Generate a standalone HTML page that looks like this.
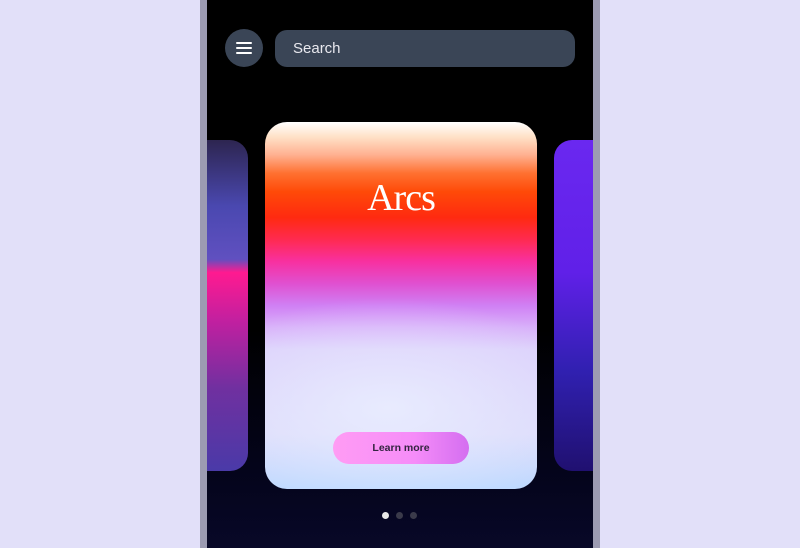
<!DOCTYPE html>
<html><head><style>
html,body{margin:0;padding:0}
body{width:800px;height:548px;background:#e2e0f9;position:relative;overflow:hidden;font-family:"Liberation Sans",sans-serif}
.phone{position:absolute;left:200px;top:0;width:400px;height:548px;background:#9c9bb2}
.scr{position:absolute;left:207px;top:0;width:386px;height:548px;background:linear-gradient(#000 0%,#000 60%,#04041a 85%,#080828 100%);overflow:hidden}
.menu{position:absolute;left:225px;top:29px;width:38px;height:38px;border-radius:50%;background:#3a4556}
.menu i{position:absolute;left:11px;width:16px;height:2px;background:#fff;border-radius:1px}
.search{position:absolute;left:275px;top:30px;width:300px;height:37px;border-radius:12px;background:#3a4556;color:#e8e8ee;font-size:15px;line-height:37px;text-indent:18px}
.card{position:absolute;left:265px;top:122px;width:272px;height:367px;border-radius:22px;overflow:hidden;
background:
radial-gradient(ellipse 80% 30% at 45% 78%, rgba(235,240,255,0.8) 0%, rgba(235,240,255,0) 100%),
linear-gradient(#ffffff 0%,#ffe2c8 4%,#ffb090 9%,#ff7030 14%,#ff4a08 19%,#ff2a10 26%,#ff2a50 32%,#f830a0 38%,#e050d0 44%,#d080f4 50%,#d8b0fa 56%,#dcd0fb 62%,#dcdafb 85%,#bcd8ff 100%)}
.title{position:absolute;left:0;right:0;top:54px;text-align:center;font-family:"Liberation Serif",serif;font-size:38px;color:#fff;letter-spacing:-1px}
.btn{position:absolute;left:68px;top:310px;width:136px;height:32px;border-radius:16px;background:linear-gradient(90deg,#ff9cf4,#f58cf8 60%,#d46ef0);font-size:10.5px;font-weight:bold;color:#332440;text-align:center;line-height:32px}
.lc{position:absolute;left:207px;top:140px;width:41px;height:331px;border-radius:0 18px 18px 0;background:linear-gradient(#2d2550 0%,#4a48b0 20%,#6050c0 36%,#ff1a90 40%,#c020a0 55%,#7030a0 75%,#4a3aa8 100%)}
.rc{position:absolute;left:554px;top:140px;width:39px;height:331px;border-radius:18px 0 0 18px;background:linear-gradient(#6a28f0 0%,#6020e8 40%,#3020b0 70%,#201070 100%)}
.dot{position:absolute;top:512px;width:7px;height:7px;border-radius:50%;background:#3a3a4a}
</style></head><body>
<div class="phone"></div>
<div class="scr"></div>
<div class="lc"></div><div class="rc"></div>
<div class="menu"><i style="top:13px"></i><i style="top:18px"></i><i style="top:23px"></i></div>
<div class="search">Search</div>
<div class="card"><div class="title">Arcs</div><div class="btn">Learn more</div></div>
<div class="dot" style="left:382px;background:#e8e8e8"></div>
<div class="dot" style="left:396px"></div>
<div class="dot" style="left:410px"></div>
</body></html>
